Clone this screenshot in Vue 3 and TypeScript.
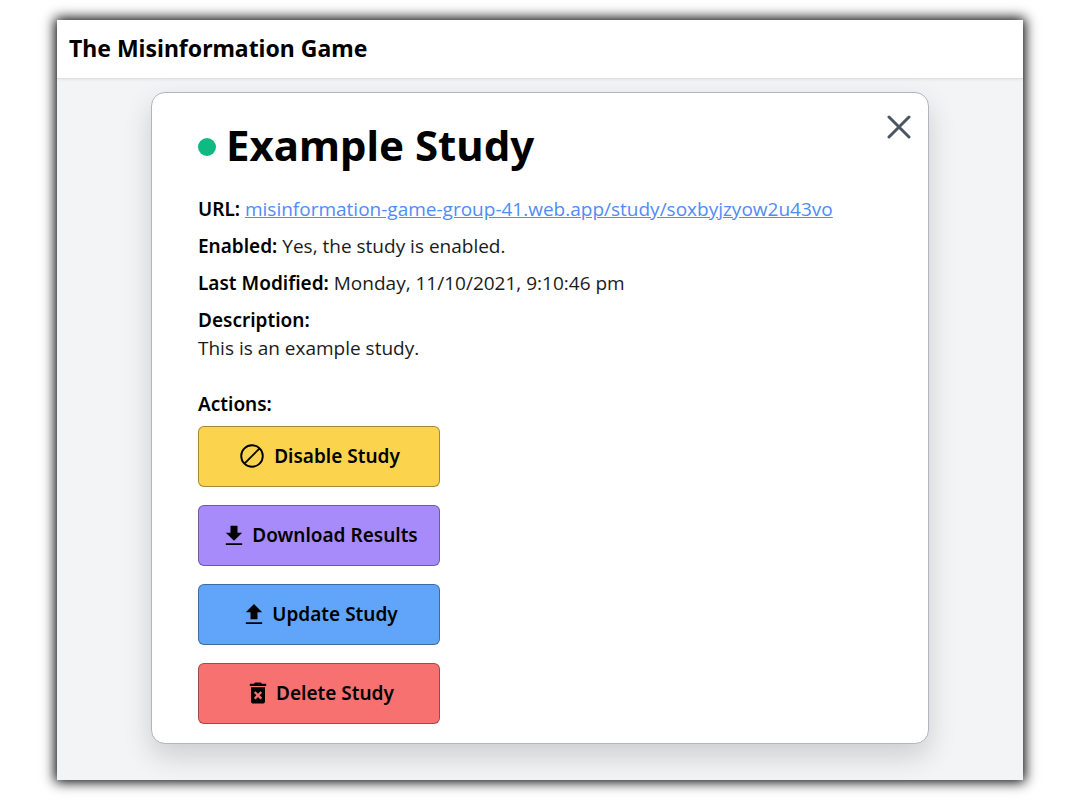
<script setup lang="ts">
interface Action {
  label: string
  kind: string
  path: string
}

const studyUrl = 'misinformation-game-group-41.web.app/study/soxbyjzyow2u43vo'

const actions: Action[] = [
  {
    label: 'Disable Study',
    kind: 'disable',
    path: 'M21.25 12a9.25 9.25 0 1 1-18.5 0a9.25 9.25 0 1 1 18.5 0zM5.5 18.5L18.5 5.5',
  },
  { label: 'Download Results', kind: 'download', path: 'M19 10h-4V4H9v6H5l7 7 7-7zM5 19v1.5h14v-1.5H5z' },
  { label: 'Update Study', kind: 'update', path: 'M9 16.5h6v-6h4l-7-7-7 7h4zm-4 2.5h14v1.5H5z' },
  {
    label: 'Delete Study',
    kind: 'delete',
    path: 'M6 19c0 1.1.9 2 2 2h8c1.1 0 2-.9 2-2V7H6v12zm2.46-7.12l1.41-1.41L12 12.59l2.12-2.12 1.41 1.41L13.41 14l2.12 2.12-1.41 1.41L12 15.41l-2.12 2.12-1.41-1.41L10.59 14l-2.13-2.12zM15.5 4l-1-1h-5l-1 1H5v2h14V4z',
  },
]
</script>

<template>
  <div class="stage">
    <div class="window">
      <header class="bar">The Misinformation Game</header>
      <main class="content">
        <section class="card">
          <button class="close" type="button" aria-label="Close">
            <svg viewBox="0 0 24 24"><path d="M2 2L22 22M22 2L2 22" /></svg>
          </button>
          <h1><span class="dot"></span>Example Study</h1>
          <p><b>URL:</b> <a :href="'https://' + studyUrl">{{ studyUrl }}</a></p>
          <p><b>Enabled:</b> Yes, the study is enabled.</p>
          <p><b>Last Modified:</b> Monday, 11/10/2021, 9:10:46 pm</p>
          <p><b>Description:</b><br />This is an example study.</p>
          <h2>Actions:</h2>
          <div class="actions">
            <button v-for="a in actions" :key="a.kind" type="button" :class="['action', a.kind]">
              <svg viewBox="0 0 24 24"><path :d="a.path" /></svg>
              {{ a.label }}
            </button>
          </div>
        </section>
      </main>
    </div>
  </div>
</template>

<style>
body {
  margin: 0;
  background: #fff;
}
</style>

<style scoped>
.stage {
  box-sizing: border-box;
  min-height: 100vh;
  padding: 20px 57px;
  display: flex;
  font-family: 'Noto Sans', sans-serif;
  font-size: 19px;
  line-height: 28px;
  color: #000;
}
.window {
  flex: 1;
  display: flex;
  flex-direction: column;
  background: #f3f4f6;
  box-shadow: 0 0 12px 2px #000;
}
.bar {
  padding: 12px 12px 14px;
  font-size: 23px;
  line-height: 32px;
  font-weight: 700;
  background: #fff;
  border-bottom: 1px solid #dfe0e2;
  box-shadow: 0 1px 3px rgba(0, 0, 0, 0.06);
}
.content {
  flex: 1;
  padding: 13px 94px 36px;
}
.card {
  position: relative;
  padding: 24px 46px 19px;
  background: #fff;
  border: 1px solid #b0b5bf;
  border-radius: 14px;
  box-shadow: 0 12px 28px rgba(0, 0, 0, 0.16);
}
.close {
  position: absolute;
  top: 22px;
  right: 17px;
  width: 24px;
  height: 24px;
  padding: 0;
  border: 0;
  background: none;
}
.close svg {
  display: block;
  width: 24px;
  height: 24px;
  fill: none;
  stroke: #4b5563;
  stroke-width: 3;
  stroke-linecap: round;
}
h1 {
  display: flex;
  align-items: center;
  gap: 10px;
  margin: 0 0 22px;
  font-size: 42px;
  line-height: 56px;
  font-weight: 700;
}
.dot {
  width: 18px;
  height: 18px;
  margin-top: 3px;
  border-radius: 50%;
  background: #10b981;
}
p {
  margin: 0 0 9px;
  font-family: 'Open Sans', 'Noto Sans', sans-serif;
  color: #1a1a1a;
}
b {
  font-family: 'Noto Sans', sans-serif;
  font-weight: 600;
  color: #000;
}
a {
  color: #4f8cf7;
}
h2 {
  margin: 28px 0 8px;
  font-size: 19px;
  line-height: 28px;
  font-weight: 600;
}
.actions {
  display: flex;
  flex-direction: column;
  align-items: flex-start;
  gap: 18px;
}
.action {
  display: flex;
  align-items: center;
  justify-content: center;
  gap: 4px;
  width: 242px;
  height: 61px;
  padding: 0 0 2px;
  border: 1px solid rgba(0, 0, 0, 0.35);
  border-radius: 6px;
  font: inherit;
  font-weight: 600;
  color: #000;
}
.action svg {
  width: 28px;
  height: 28px;
}
.disable {
  gap: 8px;
  background: #fcd34d;
}
.disable svg {
  fill: none;
  stroke: #000;
  stroke-width: 1.6;
}
.download {
  background: #a78bfa;
}
.update {
  background: #60a5fa;
}
.delete {
  background: #f87171;
}
</style>
